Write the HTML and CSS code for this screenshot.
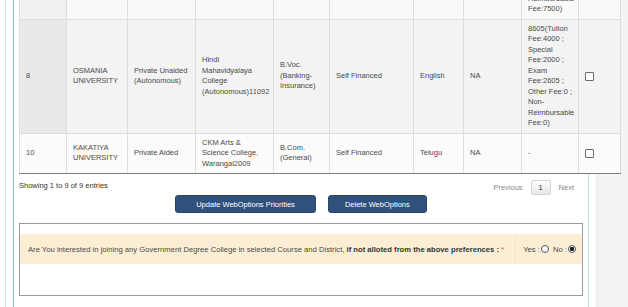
FILE: index.html
```html
<!DOCTYPE html>
<html lang="en">
<head>
    <meta charset="UTF-8">
    <title>Web Options</title>
    <link rel="stylesheet" href="styles.css">
</head>
<body>

<div class="page">
    <div class="outer">
        <div class="panel">

            <div class="table-wrap">
                <table class="options">
                    <colgroup>
                        <col class="c-sno">
                        <col class="c-univ">
                        <col class="c-type">
                        <col class="c-college">
                        <col class="c-course">
                        <col class="c-fin">
                        <col class="c-medium">
                        <col class="c-na">
                        <col class="c-fee">
                        <col class="c-check">
                    </colgroup>
                    <tbody>
                        <tr class="odd">
                            <td class="sorting"></td>
                            <td></td>
                            <td></td>
                            <td></td>
                            <td></td>
                            <td></td>
                            <td></td>
                            <td></td>
                            <td>Non-Reimbursable Fee:7500)</td>
                            <td></td>
                        </tr>
                        <tr class="even">
                            <td class="sorting">8</td>
                            <td>OSMANIA UNIVERSITY</td>
                            <td>Private Unaided (Autonomous)</td>
                            <td>Hindi Mahavidyalaya College (Autonomous)11092</td>
                            <td>B.Voc. (Banking-Insurance)</td>
                            <td>Self Financed</td>
                            <td>English</td>
                            <td>NA</td>
                            <td>8605(Tution Fee:4000 ; Special Fee:2000 ; Exam Fee:2605 ; Other Fee:0 ; Non-Reimbursable Fee:0)</td>
                            <td><input type="checkbox" class="pick"></td>
                        </tr>
                        <tr class="last">
                            <td class="sorting">10</td>
                            <td>KAKATIYA UNIVERSITY</td>
                            <td>Private Aided</td>
                            <td>CKM Arts &amp; Science College, Warangal2009</td>
                            <td>B.Com. (General)</td>
                            <td>Self Financed</td>
                            <td>Telugu</td>
                            <td>NA</td>
                            <td>-</td>
                            <td><input type="checkbox" class="pick"></td>
                        </tr>
                    </tbody>
                </table>
            </div>

            <div class="table-footer">
                <div class="info">Showing 1 to 9 of 9 entries</div>
                <div class="paging">
                    <span class="page-link">Previous</span>
                    <span class="page-num">1</span>
                    <span class="page-link">Next</span>
                </div>
            </div>

            <div class="actions">
                <button class="btn btn-wide">Update WebOptions Priorities</button>
                <button class="btn">Delete WebOptions</button>
            </div>

            <div class="question-box">
                <table class="question">
                    <tr>
                        <td>Are You interested in joining any Government Degree College in selected Course and District, <strong>if not alloted from the above preferences :</strong> <span class="req">*</span></td>
                        <td class="answer">
                            Yes :<input type="radio" name="govt" class="radio">
                            No :<input type="radio" name="govt" class="radio" checked>
                        </td>
                    </tr>
                </table>
            </div>

        </div>
    </div>
</div>

</body>
</html>
```

FILE: styles.css
```css
* {
    box-sizing: border-box;
}

body {
    margin: 0;
    font-family: "Liberation Sans", Arial, sans-serif;
    font-size: 7.5px;
    color: #4a4a4a;
    background-color: #f3f3f3;
}

.page {
    display: flex;
    width: 597px;
    min-height: 100vh;
    padding-left: 5px;
    background-color: white;
}

.outer {
    display: flex;
    flex: 1;
    min-width: 0;
    padding: 0 7px;
    border-left: 1px solid #cde5ea;
    border-right: 1px solid #e4eef0;
}

.panel {
    flex: 1;
    min-width: 0;
    padding: 0 5px;
    border-left: 1px solid #8fbcc4;
    border-right: 1px solid #c6dde2;
}

/* results table */
.table-wrap {
    margin-top: -21px;
}

.options {
    width: 601px;
    table-layout: fixed;
    border-collapse: collapse;
    line-height: 10.5px;
}

.c-sno { width: 47px; }
.c-univ { width: 61px; }
.c-type { width: 68px; }
.c-college { width: 78px; }
.c-course { width: 56px; }
.c-fin { width: 84px; }
.c-medium { width: 50px; }
.c-na { width: 58px; }
.c-fee { width: 57px; }
.c-check { width: 42px; }

.options td {
    padding: 4px 5px 4px 6px;
    border: 1px solid #dddddd;
    vertical-align: middle;
}

.options tr:first-child td {
    border-top: none;
}

.options tr.odd td {
    background-color: #f9f9f9;
}

.options tr.odd td.sorting {
    background-color: #f1f1f1;
}

.options tr.even td {
    background-color: #f3f3f3;
}

.options tr.even td.sorting {
    background-color: #e9e9e9;
}

.options tr.last td {
    background-color: #fbfbfb;
    border-bottom: 1px solid #7d7d7d;
}

.pick {
    appearance: none;
    display: block;
    width: 9px;
    height: 9px;
    margin: 0;
    background-color: white;
    border: 1px solid #6a6a6a;
    border-radius: 1px;
}

/* info + pagination */
.table-footer {
    display: flex;
    justify-content: space-between;
    align-items: flex-start;
    padding-top: 6px;
    height: 21px;
}

.info {
    color: #333;
    line-height: 11px;
}

.paging {
    display: flex;
    align-items: center;
    margin-right: 1px;
}

.page-link {
    color: #888;
    padding: 0 8px;
}

.page-num {
    width: 20px;
    height: 15px;
    line-height: 13px;
    text-align: center;
    color: #333;
    border: 1px solid #d4d4d4;
    border-radius: 2px;
    background: linear-gradient(#ffffff, #e6e6e6);
}

/* buttons */
.actions {
    display: flex;
    justify-content: center;
    gap: 12px;
    margin-bottom: 10px;
}

.btn {
    height: 18px;
    padding: 0 16px;
    font-family: "Liberation Sans", Arial, sans-serif;
    font-size: 7.5px;
    color: white;
    background-color: #30517a;
    border: 1px solid #28466b;
    border-radius: 3px;
}

.btn-wide {
    padding: 0 20px;
}

/* question */
.question-box {
    border: 1px solid #9a9a9a;
    padding: 10px 0 31px;
}

.question {
    width: 100%;
    border-collapse: collapse;
    font-size: 7.65px;
    background-color: #fbeed5;
}

.question td {
    height: 30px;
    padding: 0 8px;
    vertical-align: middle;
}

.question strong {
    color: #333;
}

.req {
    color: #d9534f;
}

.question .answer {
    width: 65px;
    padding: 0 4px 0 7px;
    border-left: 1px solid #efe2c8;
    white-space: nowrap;
}

.radio {
    appearance: none;
    width: 8px;
    height: 8px;
    margin: 0 2px 0 1px;
    vertical-align: middle;
    background-color: white;
    border: 1px solid #555;
    border-radius: 50%;
}

.radio:checked {
    background: radial-gradient(circle, #222 0 2px, white 2.5px);
}
```
